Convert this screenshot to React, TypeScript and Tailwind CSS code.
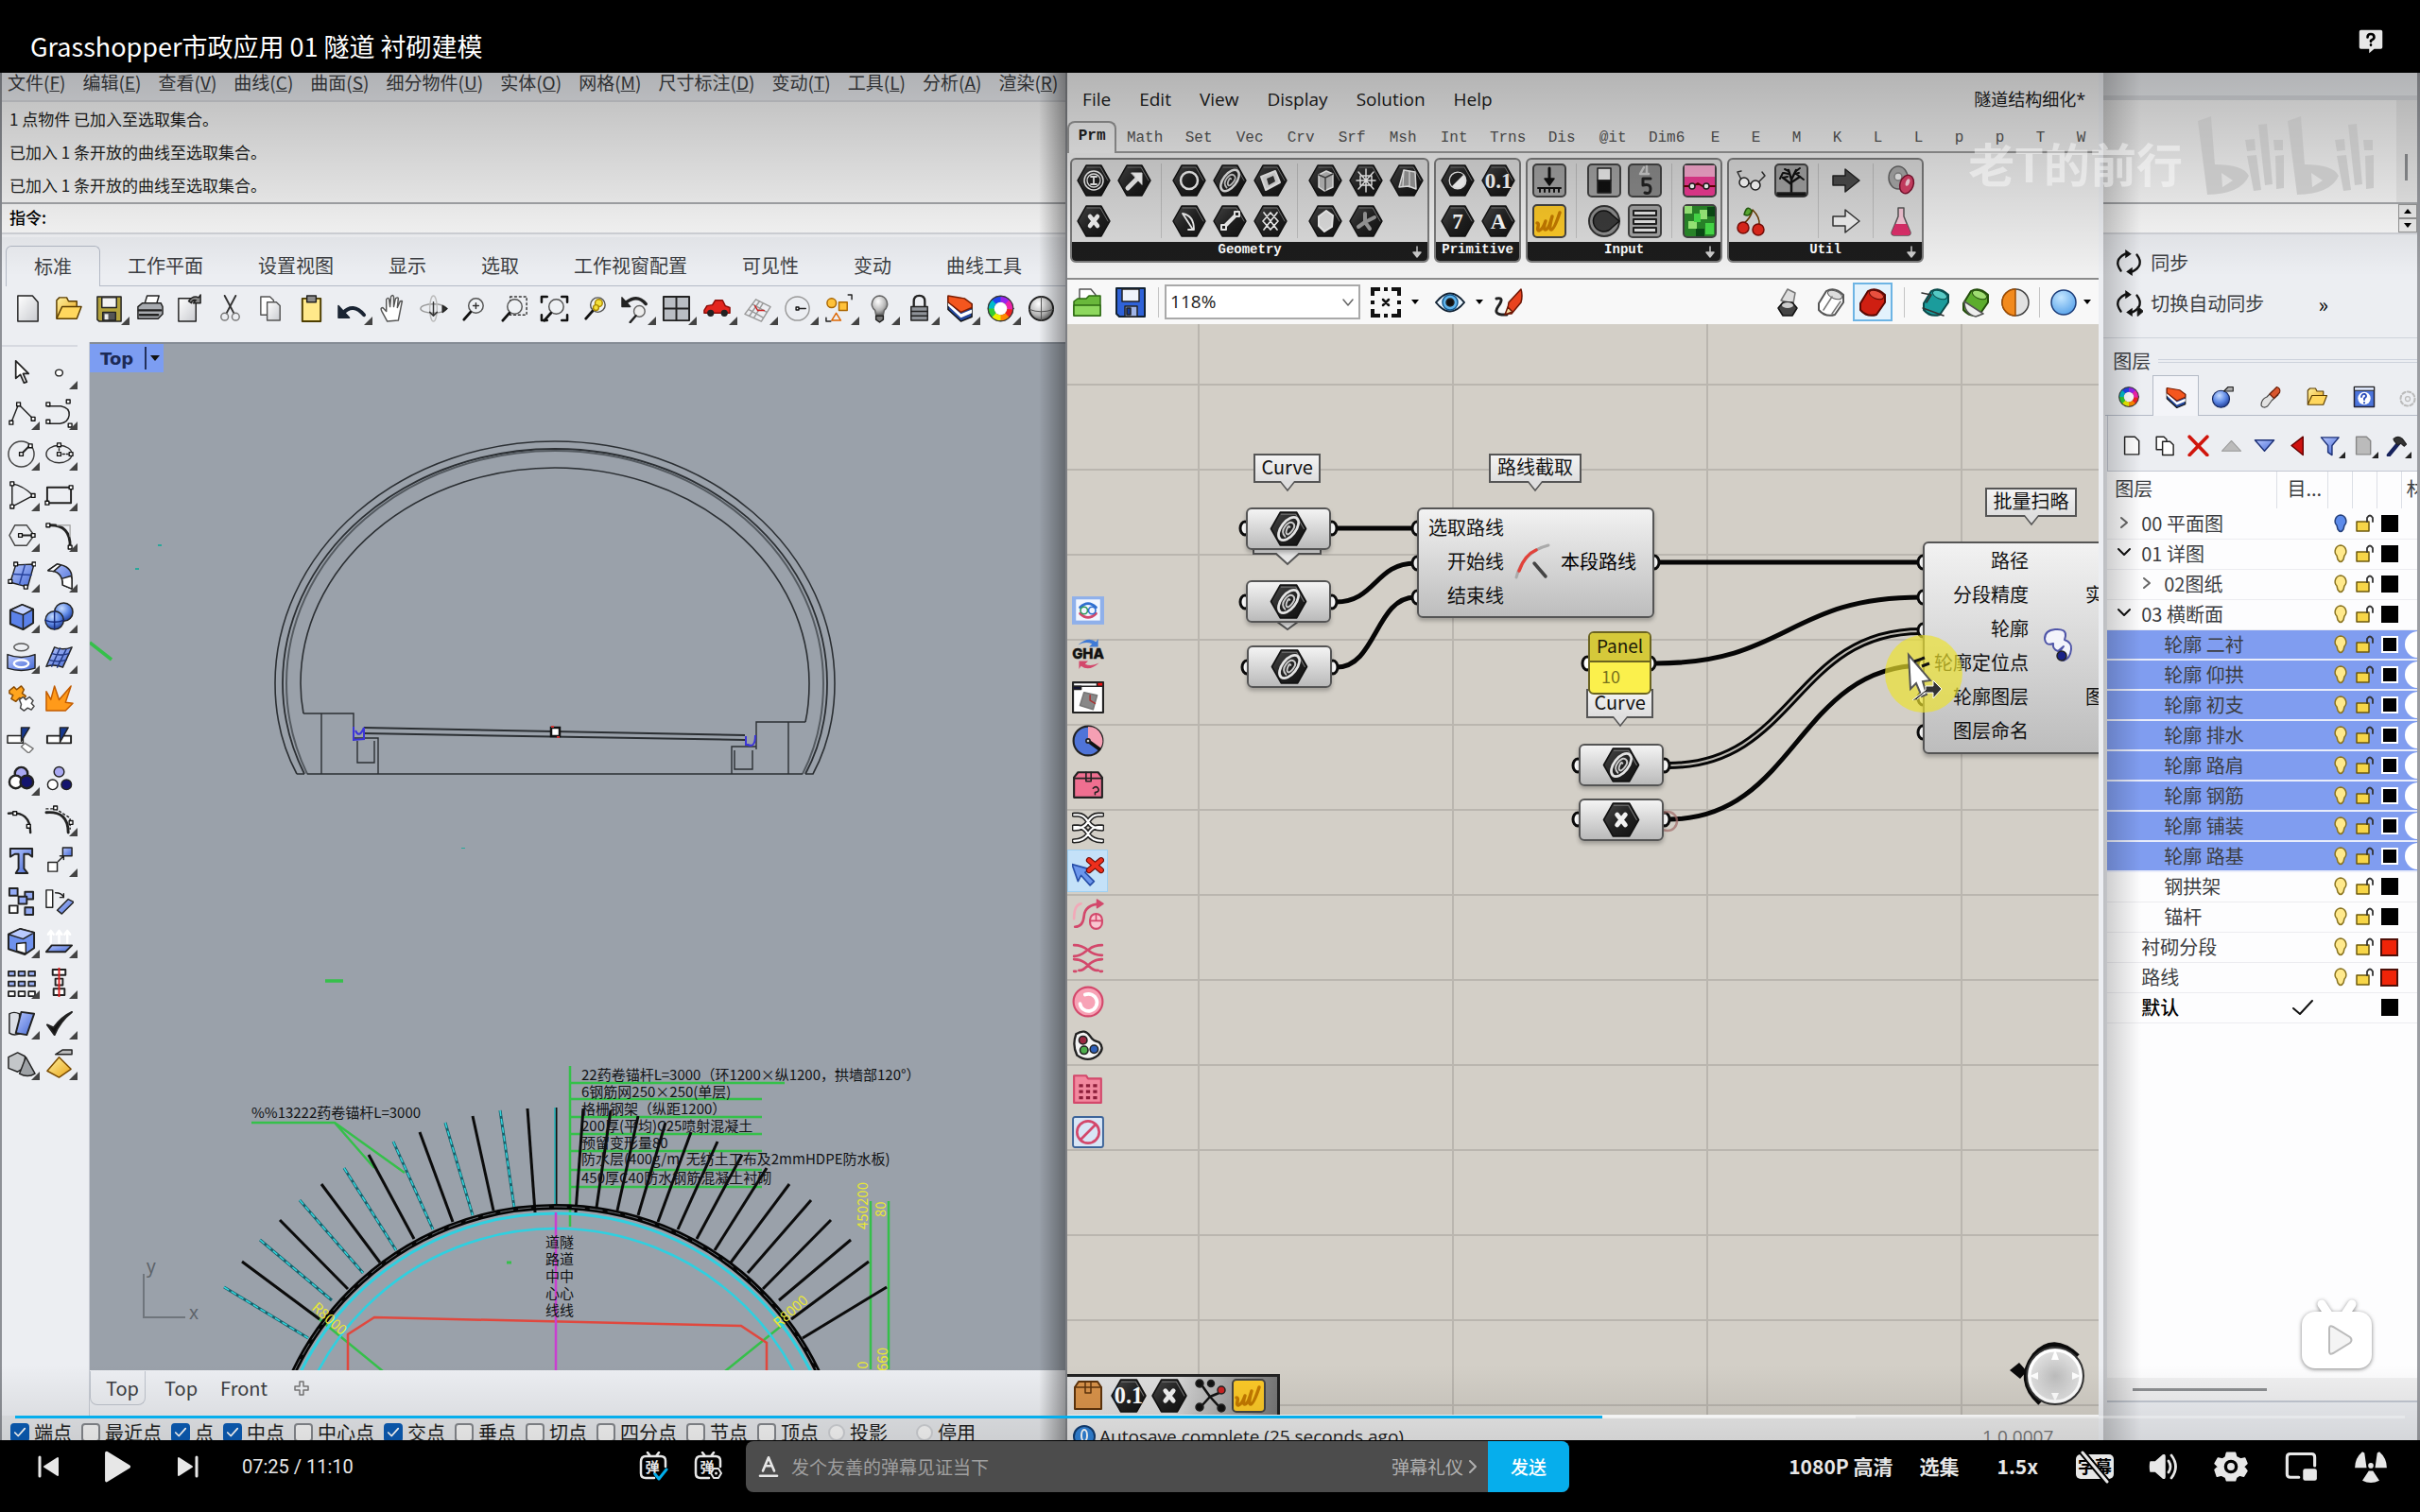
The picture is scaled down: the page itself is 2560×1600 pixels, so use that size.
import React from "react";

const CJK = "font-['Noto_Sans_CJK_SC',sans-serif]";

type Node = React.ReactNode;

function Ic({ children, className = "size-8", vb = "0 0 32 32" }: { children: Node; className?: string; vb?: string }) {
  return (
    <svg viewBox={vb} className={className} fill="none" stroke="#222" strokeWidth="1.5" strokeLinejoin="round" strokeLinecap="round" aria-hidden="true">
      {children}
    </svg>
  );
}

const Sq = ({ x, y, s = 4, f = "#fff" }: { x: number; y: number; s?: number; f?: string }) => (
  <rect x={x - s / 2} y={y - s / 2} width={s} height={s} fill={f} stroke="#111" strokeWidth="1.4" />
);

const Gradients = () => (
  <svg className="absolute size-0" aria-hidden="true">
    <defs>
      <linearGradient id="gold" x1="0" y1="0" x2="1" y2="1"><stop offset="0" stopColor="#fff2a0" /><stop offset="1" stopColor="#e9a51a" /></linearGradient>
      <linearGradient id="blue" x1="0" y1="0" x2="1" y2="1"><stop offset="0" stopColor="#b9c9ff" /><stop offset="1" stopColor="#4468d4" /></linearGradient>
      <radialGradient id="ball" cx=".4" cy=".3" r=".8"><stop offset="0" stopColor="#c6dcff" /><stop offset=".5" stopColor="#5d88e6" /><stop offset="1" stopColor="#102a80" /></radialGradient>
      <radialGradient id="sky" cx=".4" cy=".3" r=".8"><stop offset="0" stopColor="#c4e6ff" /><stop offset="1" stopColor="#4f9de8" /></radialGradient>
      <radialGradient id="grayball" cx=".4" cy=".3" r=".8"><stop offset="0" stopColor="#fff" /><stop offset=".6" stopColor="#b5b5b5" /><stop offset="1" stopColor="#444" /></radialGradient>
      <radialGradient id="dial" cx=".5" cy=".5" r=".6"><stop offset="0" stopColor="#bdbdbd" /><stop offset="1" stopColor="#ececec" /></radialGradient>
      <linearGradient id="paper" x1="0" y1="0" x2="1" y2="1"><stop offset="0" stopColor="#fff" /><stop offset="1" stopColor="#c9cbd0" /></linearGradient>
      <linearGradient id="hex" x1="0" y1="0" x2="1" y2="1"><stop offset="0" stopColor="#4a4a4a" /><stop offset=".5" stopColor="#222" /><stop offset="1" stopColor="#111" /></linearGradient>
    </defs>
  </svg>
);

/* ---------- Shared coloured glyphs ---------- */
const Wheel = () => {
  const c = ["#e22", "#f80", "#ee0", "#3c3", "#0bc", "#24e", "#92e", "#e2a"];
  return (
    <>
      <circle cx="16" cy="16" r="14" stroke="#333" strokeWidth="1" fill="#333" />
      {c.map((k, i) => {
        const a = (i * Math.PI) / 4, b = ((i + 1.1) * Math.PI) / 4;
        return <path key={k} d={`M${16 + 10 * Math.cos(a)} ${16 + 10 * Math.sin(a)} A10 10 0 0 1 ${16 + 10 * Math.cos(b)} ${16 + 10 * Math.sin(b)}`} stroke={k} strokeWidth="6" strokeLinecap="butt" />;
      })}
      <circle cx="16" cy="16" r="7" fill="#fff" stroke="none" />
    </>
  );
};
const Shell = () => (
  <>
    <path d="M3 3v14l14 13 12-5V11l-12 7z" fill="#24489e" stroke="#111" />
    <path d="M3 13l14 13 12-5v-4l-12 5L3 9z" fill="#fff" stroke="none" />
    <path d="M3 2l18 3 8 6v4l-12 5L3 9z" fill="#f4561e" stroke="#7a1c00" />
  </>
);
const FolderI = () => (
  <>
    <path d="M3 26V7l3-3h8l2 4h9v5" fill="url(#gold)" stroke="#5a3c00" />
    <path d="M3 27l6-13h21l-5 13z" fill="#ffd75e" stroke="#5a3c00" />
  </>
);
const Mag = ({ x = 18, y = 13 }: { x?: number; y?: number }) => (
  <>
    <circle cx={x} cy={y} r="8" fill="#eef1f4" stroke="#555" />
    <path d={`M${x - 6} ${y + 7}L${x - 13} ${y + 15}`} stroke="#111" strokeWidth="3" />
  </>
);

/* ---------- Rhino toolbar ---------- */
const fileTools: [string, boolean, Node][] = [
  ["新建", false, <path d="M5 2h16l6 7v21H5z" fill="url(#paper)" />],
  ["打开", false, <FolderI />],
  ["保存", true, <><path d="M3 3h26v27H5l-2-2z" fill="#b3a23c" /><path d="M8 4h16v11H8z" fill="#f2f2f2" /><path d="M9 20h14v9H9z" fill="#555" /><path d="M11 22h4v6h-4z" fill="#eee" stroke="none" /></>],
  ["打印", false, <><path d="M10 12l3-10h13l-3 10" fill="#fff" /><path d="M3 14l5-4h20l2 4v8l-5 5H3z" fill="#a8abb0" /><path d="M4 18h24M5 23h20" stroke="#222" strokeWidth="2.4" /></>],
  ["文件属性", false, <><path d="M4 5h14l5 5v20H4z" fill="url(#paper)" /><path d="M15 8q5-7 11-4l2-3v9h-8l3-3q-4-1-5 3z" fill="#888" /></>],
  ["剪切", false, <><path d="M10 2l10 19M22 2L12 21" stroke="#333" strokeWidth="2" /><circle cx="10" cy="25" r="4" stroke="#777" /><circle cx="22" cy="25" r="4" stroke="#777" /></>],
  ["复制", false, <><path d="M5 3h10l4 4v16H5z" fill="#fff" stroke="#555" /><path d="M12 9h10l4 4v16H12z" fill="url(#paper)" stroke="#555" /></>],
  ["粘贴", false, <><path d="M6 5h20v25H6z" fill="#ffe98a" stroke="#4d3d00" strokeWidth="2" /><path d="M11 2h10v7H11z" fill="#8b8b8b" /></>],
  ["撤销", true, <><path d="M6 21Q17 9 29 23" stroke="#1a2433" strokeWidth="4" /><path d="M1 13v13h12z" fill="#1a2433" stroke="#1a2433" /></>],
  ["平移", false, <path d="M10 30L4 19q-2-4 1-4l4 4V6q2-3 3 0l1 8 1-11q2-3 3 0v11l2-9q3-2 3 0l-1 10 3-7q3-1 2 1l-4 20z" fill="#fff" stroke="#555" />],
  ["旋转视图", false, <><ellipse cx="16" cy="16" rx="14" ry="5" stroke="#999" /><ellipse cx="16" cy="16" rx="4" ry="14" stroke="#bbb" /><path d="M16 9v14M12 20l4 4 4-4" stroke="#333" /><path d="M26 13l5 3-5 4z" fill="#333" /></>],
  ["动态缩放", false, <><Mag /><path d="M15 13h6M18 10v6" stroke="#333" /></>],
  ["框选缩放", false, <><path d="M11 3h18v20H11z" strokeDasharray="2 3" stroke="#333" /><Mag x={16} y={14} /></>],
  ["缩放至最大范围", false, <><path d="M2 9V3h6M24 3h6v6M30 23v6h-6M8 29H2v-6" stroke="#111" strokeWidth="2.6" /><Mag x={18} y={14} /></>],
  ["缩放至选取物件", false, <><Mag x={19} y={12} /><circle cx="20" cy="10" r="4" fill="#f5e13a" stroke="#a80" /><circle cx="17" cy="15" r="3" fill="#f5e13a" stroke="#a80" /></>],
  ["复原视图", true, <><path d="M6 9q12-9 21 2" stroke="#222" strokeWidth="3.5" /><path d="M1 4v10h9z" fill="#222" /><circle cx="20" cy="19" r="6" fill="#eee" stroke="#666" /><path d="M16 24l-6 7" strokeWidth="2.6" /></>],
  ["四视图", true, <><path d="M2 3h28v26H2z" fill="#b9bdc3" strokeWidth="2" /><path d="M16 3v26M2 16h28" strokeWidth="2" /></>],
  ["载入车辆", true, <><path d="M2 18l3-5 6-1 3-5h8l3 6 5 2v6H2z" fill="#e3251e" stroke="#8c0c08" /><circle cx="9" cy="21" r="3" fill="#222" /><circle cx="24" cy="21" r="3" fill="#222" /></>],
  ["工作平面", true, <><path d="M2 22L14 6l16 8-10 16zM6 17l16 9M10 11l16 9M12 26L22 10M7 24L18 8" stroke="#999" /><path d="M16 18l-3-5M16 18h7" stroke="#c22" /></>],
  ["圆", true, <><circle cx="15" cy="16" r="13" stroke="#999" /><path d="M15 16h9" /><Sq x={15} y={16} s={3} /></>],
  ["选取", true, <><circle cx="8" cy="10" r="5" fill="#ffc23a" stroke="#a60" /><path d="M16 9h9v9h-9z" fill="#ffc23a" stroke="#a60" /><path d="M13 21l5 8H8z" stroke="#d60" /><path d="M26 1h4v5M2 26v4h5" stroke="#222" /></>],
  ["隐藏", true, <><path d="M16 2a9 9 0 0 1 5 16l-1 5h-8l-1-5a9 9 0 0 1 5-16z" fill="url(#grayball)" stroke="#666" /><path d="M12 24h8v4l-4 3-4-3z" fill="#777" /></>],
  ["锁定", true, <><path d="M10 14V8q0-6 6-6t6 6v6" strokeWidth="2.4" /><path d="M7 14h18v15H7z" fill="#8f9399" /><path d="M7 19h18M7 24h18" /></>],
  ["图层", true, <Shell />],
  ["颜色", true, <Wheel />],
  ["渲染", false, <><circle cx="16" cy="16" r="13" fill="url(#grayball)" stroke="#222" strokeWidth="2" /><path d="M3 17q13 5 26 0M16 3v26" stroke="#555" strokeWidth="1" /></>],
];

const pts = (list: [number, number][]) => list.map(([x, y], i) => <Sq key={i} x={x} y={y} />);

const sideTools: [string, boolean, Node][] = [
  ["选取", false, <path d="M10 3v19l5-4 4 9 3-1-4-9h6z" fill="#fff" strokeWidth="1.8" />],
  ["点", true, <ellipse cx="16" cy="16" rx="4" ry="3.5" fill="#fff" />],
  ["多重直线", true, <><path d="M5 26L13 6l16 16" />{pts([[5, 26], [13, 6], [29, 22]])}</>],
  ["控制点曲线", true, <><path d="M4 8h14q10 2 9 10t-10 9H4" />{pts([[4, 6], [26, 3], [4, 25], [28, 29]])}</>],
  ["圆", true, <><circle cx="16" cy="16" r="14" stroke="#444" /><path d="M16 16l9-9" strokeWidth="2" />{pts([[16, 16], [26, 7]])}</>],
  ["椭圆", true, <><ellipse cx="16" cy="16" rx="14" ry="9.5" stroke="#333" /><path d="M16 16V6M16 16h13" strokeDasharray="2 2" />{pts([[16, 6], [16, 16], [29, 16]])}</>],
  ["圆弧", true, <><path d="M6 4v25L29 17Q18 6 6 4z" />{pts([[6, 4], [6, 29], [29, 17]])}</>],
  ["矩形", true, <><path d="M3 8h26v17H3z" strokeWidth="2" />{pts([[29, 8], [3, 25]])}</>],
  ["多边形", true, <><path d="M9 5h13l8 11-8 11H9L3 16z" stroke="#444" /><path d="M15 16h14" strokeWidth="2" />{pts([[15, 16], [29, 16]])}</>],
  ["曲线圆角", true, <><path d="M5 5q24-1 23 24" strokeWidth="3" /><path d="M14 5h14v12" stroke="#aaa" />{pts([[4, 5], [28, 29]])}</>],
  ["曲面", true, <><path d="M10 4l20-1-7 25-19-5z" fill="url(#blue)" /><path d="M20 4l-6 21M7 14l20 1" stroke="#27429c" />{pts([[10, 3], [30, 3], [4, 22], [21, 28]])}</>],
  ["挤出曲面", true, <><path d="M4 10l10-7q16 2 16 15v12l-10-4q0-16-16-16z" fill="url(#blue)" /><path d="M4 10l10-7 4 1-8 7zM20 26q0-5-1-7l10-3q1 2 1 4v10z" fill="#fff" /></>],
  ["立方体", true, <><path d="M4 9l13-6 12 5v15l-11 7-14-6z" fill="#5b82ea" strokeWidth="2" /><path d="M4 9l14 5 11-6-12-5z" fill="#c4d3ff" /><path d="M18 14v16" /></>],
  ["球体", true, <><circle cx="21" cy="11" r="10" fill="url(#ball)" /><circle cx="11" cy="20" r="10" fill="url(#ball)" /><path d="M1 20q10 4 20 0M11 10v20" stroke="#14297a" /></>],
  ["投影曲线", true, <><ellipse cx="16" cy="5" rx="8" ry="4" stroke="#555" /><path d="M1 13q15 6 30 0v15q-15 5-30 0z" fill="url(#blue)" /><ellipse cx="16" cy="23" rx="8" ry="4" stroke="#fff" strokeWidth="2.5" /></>],
  ["网格", true, <><path d="M11 5q9 4 19 0L20 27q-9-4-18-1z" fill="url(#blue)" /><path d="M17 6L8 26M24 7L14 27M8 12q9 3 19 0M5 19q9 3 19 0" stroke="#1e357f" /></>],
  ["组合", false, <><path d="M3 8l5-4 3 3 5-4 3 4-2 4 4 3-3 4-4-2-4 4-5-3 2-4-4-2z" fill="#ffa51e" stroke="#8a4a00" /><path d="M14 18l4-3 3 3 4-3 4 4-2 3 3 3-3 4-4-2-4 3-4-3 1-4z" fill="#fff" stroke="#444" /></>],
  ["炸开", false, <path d="M2 30V9l5 9L11 3l5 15L29 3l-6 18 8 1-8 8z" fill="#ff9a1a" stroke="#c25c00" />],
  ["修剪", false, <><path d="M1 13h17v8H1z" fill="#fff" /><path d="M16 4h9l-9 15z" fill="#16388f" /><path d="M20 21l9 6-5 5-8-7z" fill="#fff" stroke="#777" /></>],
  ["分割", false, <><path d="M3 13h26v8H3z" fill="#fff" strokeWidth="2" /><path d="M17 4h9l-9 16z" fill="#16388f" /></>],
  ["布尔运算联集", true, <><circle cx="16" cy="10" r="7" fill="#a9a9f2" strokeWidth="2.5" /><circle cx="10" cy="19" r="7" fill="#fff" strokeWidth="2.5" /><circle cx="22" cy="19" r="7" fill="#14146e" strokeWidth="2.5" /></>],
  ["群组", false, <><circle cx="16" cy="8" r="5.5" fill="#a9a9f2" /><circle cx="9" cy="22" r="5.5" fill="#fff" /><circle cx="24" cy="22" r="5.5" fill="#14146e" /></>],
  ["编辑点", false, <><path d="M2 9q24-3 24 21" strokeWidth="2.5" />{pts([[9, 9], [24, 23]])}</>],
  ["控制点", true, <><path d="M2 8q24-2 24 22" strokeWidth="3" /><path d="M2 4h10l16 10v12" strokeDasharray="2 3" />{pts([[12, 3], [29, 19]])}</>],
  ["文字", false, <path d="M4 3h24v9l-4-3h-5v16l4 5H10l3-5V9H9l-5 3z" fill="url(#blue)" strokeWidth="2" />],
  ["变动", true, <><path d="M4 18h10v10H4z" fill="#fff" /><path d="M20 2h10v9H20z" fill="url(#blue)" /><path d="M15 17l6-6M17 11h4v4" /></>],
  ["阵列", false, <>{[[7, 6], [24, 10], [17, 15], [7, 25], [24, 27]].map(([x, y], i) => <rect key={i} x={x - 4} y={y - 4} width="9" height="8" fill={i === 3 ? "#fff" : "#94abf5"} strokeWidth="2" />)}</>],
  ["定位", false, <><path d="M2 4h7v19H2z" fill="#fff" /><path d="M14 26l12-12 6 3-13 13z" fill="url(#blue)" /><path d="M12 7q7 0 9 5M17 12h4V8" /></>],
  ["实体编辑", true, <><path d="M2 8l13-6 15 4v17l-10 7-18-6z" fill="#6f92ee" strokeWidth="2" /><path d="M2 8l16 5 12-7-15-4z" fill="#b9caff" /><path d="M11 18l10-1v12l-10-3z" fill="#fff" /></>],
  ["移动", true, <><path d="M8 20h22l-7 7H2z" fill="url(#blue)" strokeWidth="2" /><path d="M7 17V5M16 17V5M25 17V5M4 8l3-4 3 4M13 8l3-4 3 4M22 8l3-4 3 4" stroke="#fff" strokeWidth="2.5" /></>],
  ["矩形阵列", true, <>{[4, 15, 26].map((y) => [4, 15, 26].map((x) => <rect key={`${x}-${y}`} x={x - 2} y={y} width="7" height="5" fill={y === 26 ? "#fff" : "#9db3fa"} strokeWidth="1.8" />))}</>],
  ["对齐", true, <><path d="M9 2h14v6H9zM12 12h8v7h-8zM10 23h12v7H10z" fill="#fff" strokeWidth="2" /><path d="M16 0v32" stroke="#d22" strokeWidth="2" /></>],
  ["弯曲", true, <><path d="M3 6q5-3 11 0v22q-7 2-11-1z" fill="#dcdfe6" /><path d="M16 4l14 2-8 23-12-2z" fill="url(#blue)" strokeWidth="2" /></>],
  ["检查", true, <path d="M3 18l8 11Q17 14 30 4 19 9 10 21z" fill="#111" strokeWidth="2" />],
  ["基本体", true, <><path d="M2 9l10-5 8 4v12l-8 5-10-4z" fill="#c3c6c9" /><path d="M21 9l10 18q-8 5-17 0z" fill="#9ea2a6" /></>],
  ["放样", true, <><path d="M16 9l13 13-13 9L3 24z" fill="url(#gold)" stroke="#7a4b00" /><path d="M12 6l8-5h10v5H20z" fill="#bbb" /></>],
];

function Corner() {
  return <span className="absolute right-0 bottom-1 size-0 border-b-[9px] border-l-[9px] border-b-[#444] border-l-transparent" />;
}

function ToolButton({ label, corner, children }: { label: string; corner?: boolean; children: Node }) {
  return (
    <button type="button" aria-label={label} className="relative flex h-[43px] w-full items-center justify-center">
      <Ic className="size-[31px]">{children}</Ic>
      {corner && <Corner />}
    </button>
  );
}

/* ---------- Tunnel drawing ---------- */
const boltTips: [number, number, number, number][] = [
  [237, 1361, 326, 1415], [256, 1334, 338, 1395], [275, 1311, 351, 1375], [296, 1290, 368, 1363], [317, 1269, 384, 1346],
  [340, 1252, 402, 1335], [364, 1235, 419, 1322], [390, 1221, 438, 1310], [416, 1207, 458, 1300], [444, 1197, 479, 1292],
  [471, 1187, 500, 1285], [500, 1180, 522, 1280], [529, 1174, 544, 1277], [558, 1172, 566, 1282],
];
const notes: [string, number, number, number][] = [
  ["22药卷锚杆L=3000（环1200×纵1200，拱墙部120°）", 1142, 1145, 830],
  ["6钢筋网250×250(单层)", 1160, 1162, 806],
  ["格栅钢架（纵距1200）", 1178, 1181, 806],
  ["200厚(平均)C25喷射混凝土", 1196, 1199, 806],
  ["预留变形量80", 1214, 1217, 806],
  ["防水层(400g/m  无纺土工布及2mmHDPE防水板)", 1231, 1237, 806],
  ["450厚C40防水钢筋混凝土衬砌", 1251, 1255, 806],
];

function TunnelDrawing() {
  return (
    <svg className="absolute inset-0 h-full w-full" fill="none" role="img" aria-label="隧道断面">
      <g transform="translate(-95 -363)" stroke="#2b2f33" strokeWidth="1.4">
        <path d="M314 818Q291 775 291 722A296 256 0 0 1 883 722Q883 775 860 818H852M314 818h8" strokeWidth="1.6" />
        <path d="M322 818Q299 772 299 722A288 248 0 0 1 875 722Q875 775 852 818" strokeWidth="1.8" />
        <path d="M325 818Q303 772 303 722A284 246 0 0 1 871 722Q871 775 849 818" stroke="#555b61" strokeWidth="2" />
        <path d="M321 754Q318 738 318 722A269 228 0 0 1 856 722Q856 745 852 763" strokeWidth="1.6" />
        <path d="M321 754H374V783M374 780H400V818M378 783V806H396V783M340 754V818M325 818H849" />
        <path d="M852 763H800V792M800 789H774V818M777 793V813H796V793M834 763V818" />
        <path d="M385 769L788 777M385 775L788 782" strokeWidth="2" />
        <path d="M374 768v14l11-1v-12q-5 12-9 3M789 778v9h2q8 4 8-10" stroke="#3b34d8" strokeWidth="2" />
        <rect x="583" y="769" width="9" height="9" fill="#fff" stroke="#111" strokeWidth="2.5" />
        <path d="M583 768h3M589 779h3" stroke="#c33" strokeWidth="2" />

        <g stroke="#35c04a" strokeWidth="2.5">
          <path d="M95 679l23 18M344 1037h19" strokeWidth="3.5" />
          <path d="M266 1187h88l74 53M354 1187l42 48M603 1127v170M921 1270v178M940 1270v178M328 1387l77 63M829 1400l-62 50" />
          {notes.map(([t, , y, x2]) => <path key={t} d={`M603 ${y}H${x2}`} />)}
        </g>
        <path d="M536 1335h5" stroke="#35c04a" strokeWidth="3" />
        <path d="M145 600v2M169 575v2M490 896v1" stroke="#2aa79a" strokeWidth="4" />

        {boltTips.map(([x1, y1, x2, y2], i) => (
          <g key={x1}>
            <path d={`M${x1} ${y1}L${x2} ${y2}`} stroke={i % 2 ? "#0b0b0b" : "#16606a"} strokeWidth="3" />
            {i % 2 === 0 && <path d={`M${x1} ${y1}L${x2} ${y2}`} stroke="#35d5dc" strokeWidth="1.5" strokeDasharray="6 3" />}
            <path d={`M${1175 - x1} ${y1}L${1175 - x2} ${y2}`} stroke="#0b0b0b" strokeWidth="3" />
          </g>
        ))}
        <path d="M588 1171v106" stroke="#111" strokeWidth="3" />
        <path d="M587 1171v106" stroke="#35d5dc" />

        <circle cx="588" cy="1584" r="301" stroke="#2fd0e0" strokeWidth="3" />
        <circle cx="588" cy="1584" r="285" stroke="#2fd0e0" strokeWidth="2.5" />
        <circle cx="588" cy="1583" r="307" stroke="#050505" strokeWidth="6" />
        <circle cx="588" cy="1583" r="307" stroke="#6b6f74" strokeWidth="1" strokeDasharray="14 5" />
        <path d="M368 1450V1411L396 1393 784 1402 811 1420V1450" stroke="#e0483e" strokeWidth="2.5" />
        <path d="M588 1282V1450" stroke="#c93fd0" strokeWidth="2.5" />

        <g stroke="none" fill="#101214" fontSize="15" fontFamily="'Noto Sans CJK SC', sans-serif">
          <text x="266" y="1182">%%13222药卷锚杆L=3000</text>
          {notes.map(([t, y]) => <text key={t} x="615" y={y} xmlSpace="preserve">{t}</text>)}
          {["道隧", "路道", "中中", "心心", "线线"].map((t, i) => <text key={t} x="577" y={1319 + i * 18}>{t}</text>)}
          <g fill="#e8e834" fontSize="15">
            <text transform="translate(918 1300) rotate(-90)">450200</text>
            <text transform="translate(937 1287) rotate(-90)">80</text>
            <text transform="translate(918 1456) rotate(-90)">10</text>
            <text transform="translate(939 1450) rotate(-90)">660</text>
            <text transform="translate(329 1384) rotate(42)">R8000</text>
            <text transform="translate(824 1405) rotate(-42)">R8000</text>
          </g>
        </g>
        <path d="M152 1347V1393H196" stroke="#6f757c" strokeWidth="2" />
        <g stroke="none" fill="#5e646a" fontSize="19" fontFamily="'Noto Sans', sans-serif">
          <text x="155" y="1346">y</text>
          <text x="200" y="1395">x</text>
        </g>
      </g>
    </svg>
  );
}

/* ---------- Rhino window ---------- */
const snaps: [string, boolean][] = [["端点", true], ["最近点", false], ["点", true], ["中点", true], ["中心点", false], ["交点", true], ["垂点", false], ["切点", false], ["四分点", false], ["节点", false], ["顶点", false]];

function RhinoWindow() {
  return (
    <section className="relative flex h-full min-w-0 flex-[1126] flex-col overflow-hidden border-l-2 border-[#8d9096] bg-[#eceef2] text-[#3c3e42]">
      <nav className="flex h-[29px] shrink-0 items-start gap-[18px] overflow-hidden pl-1.5 text-[19px] leading-5 whitespace-nowrap">
        {[["文件", "F"], ["编辑", "E"], ["查看", "V"], ["曲线", "C"], ["曲面", "S"], ["细分物件", "U"], ["实体", "O"], ["网格", "M"], ["尺寸标注", "D"], ["变动", "T"], ["工具", "L"], ["分析", "A"], ["渲染", "R"]].map(([t, k]) => (
          <button type="button" key={t} className="shrink-0">{t}(<u>{k}</u>)</button>
        ))}
      </nav>
      <div className="h-[110px] shrink-0 border-t-2 border-b-2 border-t-[#dcdee2] border-b-[#a9abae] bg-[#fafafa] pl-2 text-[17px] leading-[35px] text-[#1d1e20]">
        <p>1 点物件 已加入至选取集合。</p>
        <p>已加入 1 条开放的曲线至选取集合。</p>
        <p>已加入 1 条开放的曲线至选取集合。</p>
      </div>
      <label className="flex h-8 shrink-0 items-center border-b-2 border-[#d5d7dc] bg-[#fcfcfc] pb-0.5 pl-2 text-[17px] font-medium text-black">
        指令:
        <input className="ml-1 min-w-0 flex-1 bg-transparent outline-none" />
      </label>
      <div className="flex h-[55px] shrink-0 items-end border-t-[3px] border-[#f4f5f8] pl-1 text-[20px] whitespace-nowrap">
        {["标准", "工作平面", "设置视图", "显示", "选取", "工作视窗配置", "可见性", "变动", "曲线工具"].map((t, i) => (
          <button type="button" key={t} className={i === 0 ? "h-[43px] rounded-t-md border border-b-0 border-[#b4bac6] px-[29px]" : "h-[43px] border-b border-[#b4bac6] px-[29px]"}>{t}</button>
        ))}
        <span className="h-[43px] flex-1 border-b border-[#b4bac6]" />
      </div>
      <div className="grid h-[59px] shrink-0 grid-cols-26 pt-0.5 pr-1 pl-1.5">
        {fileTools.map(([l, c, n]) => <ToolButton key={l} label={l} corner={c}>{n}</ToolButton>)}
      </div>
      <div className="flex min-h-0 flex-1">
        <aside className="w-[93px] shrink-0 border-r border-[#c8ccd4] pt-[3px] pr-3">
          <div className="grid grid-cols-2 border-t-2 border-[#d6d9e0] pt-1.5">
            {sideTools.map(([l, c, n]) => <ToolButton key={l} label={l} corner={c}>{n}</ToolButton>)}
          </div>
        </aside>
        <div className="flex min-w-0 flex-1 flex-col">
          <div className="relative min-h-0 flex-1 overflow-hidden border-t-2 border-[#858c95] bg-[#9aa1aa]">
            <TunnelDrawing />
            <button type="button" className="absolute top-0 left-0 flex h-[30px] items-center bg-[#7c9df2] pl-[11px] font-['DejaVu_Sans',sans-serif] text-[18px] font-bold text-[#1c2a55]">
              Top
              <span className="ml-3 h-6 w-[2px] bg-[#23305c]" />
              <span className="mx-1 size-0 border-x-[5px] border-t-[6px] border-x-transparent border-t-[#111]" />
            </button>
          </div>
          <div className="flex h-12 shrink-0 items-start pt-px text-[20px]">
            <button type="button" className="h-9 rounded-b-lg border border-t-0 border-[#bfc4cd] pr-1.5 pl-4">Top</button>
            <button type="button" className="ml-5 h-9">Top</button>
            <button type="button" className="ml-6 h-9">Front</button>
            <button type="button" aria-label="添加视图" className="ml-7 flex h-9 items-center">
              <Ic className="size-4" vb="0 0 16 16"><path d="M6 1h4v5h5v4h-5v5H6v-5H1V6h5z" stroke="#777" /></Ic>
            </button>
          </div>
        </div>
      </div>
      <div className="h-[26px] shrink-0 overflow-hidden bg-[#e4e6e9] text-[#1d1e20]">
        <div className="flex h-9 items-center gap-2.5 pl-[9px] text-[20px] whitespace-nowrap">
          {snaps.map(([t, on]) => (
            <label key={t} className="relative flex items-center gap-[5px]">
              <input type="checkbox" defaultChecked={on} className="size-5 appearance-none rounded-[4px] border-2 border-[#85888d] bg-[#f5f5f5] checked:border-[#0b5cb5] checked:bg-[#0b5cb5]" />
              {on && <Ic className="pointer-events-none absolute left-[3px] size-3.5" vb="0 0 16 16"><path d="M2 8l4 4 8-9" stroke="#fff" strokeWidth="2" /></Ic>}
              {t}
            </label>
          ))}
          {["投影", "停用"].map((t) => (
            <label key={t} className="mr-5 flex items-center gap-[5px]">
              <input type="radio" name="snapmode" className="size-[18px] appearance-none rounded-full border-2 border-[#cfd1d5] bg-[#f7f7f7]" />
              {t}
            </label>
          ))}
        </div>
      </div>
      <span className="pointer-events-none absolute inset-y-0 right-0 w-7 bg-gradient-to-l from-black/35 to-transparent" />
    </section>
  );
}

/* ---------- Grasshopper ---------- */
function Hex({ children, className = "h-[34px] w-9" }: { children: Node; className?: string }) {
  return (
    <Ic className={className} vb="0 0 36 34">
      <path d="M10 1h16l9 16-9 16H10L1 17z" fill="url(#hex)" stroke="#111" strokeWidth="1.5" />
      <path d="M11 3h14l8 14" stroke="#777" strokeWidth="1" />
      <g stroke="#f2f2f2" strokeWidth="2">{children}</g>
    </Ic>
  );
}
const glyph = (t: string) => (
  <text x="18" y="25" textAnchor="middle" fontSize="23" fontWeight="700" fontFamily="'Liberation Serif', serif" fill="#fff" stroke="none">{t}</text>
);
const Spiral = () => (
  <g transform="rotate(38 18 17)"><ellipse cx="18" cy="17" rx="7" ry="13" stroke="#e4e4e4" strokeWidth="2.5" /><path d="M20 25q-6-1-6-8t4-7 4 6-2 6-3-4 1-3" stroke="#ccc" strokeWidth="1.8" /></g>
);
const Cross = () => <path d="M14 12l8 10M22 12l-8 10" strokeWidth="4.5" />;

function Tile({ children, fill = "#a2a2a2" }: { children: Node; fill?: string }) {
  return (
    <Ic className="size-9" vb="0 0 36 36">
      <rect x="1" y="1" width="34" height="34" rx="4" fill={fill} stroke="#444" strokeWidth="2" />
      {children}
    </Ic>
  );
}
const Scribble = () => <path d="M5 20q2 0 1 4t1 4q4-1 7-10-3 9 0 9t7-14q-4 14-1 14t9-18" stroke="#c47a00" strokeWidth="3.5" />;

type Cell = Node | null;
const ribbon: { title: string; more: boolean; groups: Cell[][] }[] = [
  {
    title: "Geometry", more: true,
    groups: [
      [<Hex><circle cx="18" cy="17" r="10" strokeWidth="1.5" /><circle cx="18" cy="17" r="7" strokeWidth="1.3" /><path d="M18 13v8M15 13h6M15 21h6" strokeWidth="1.8" /></Hex>, <Hex><path d="M11 25l10-10" strokeWidth="5" /><path d="M15 9h11v12z" fill="#fff" strokeWidth="1" /></Hex>, <Hex><Cross /></Hex>, null],
      [<Hex><circle cx="18" cy="17" r="9" strokeWidth="2.5" /></Hex>, <Hex><Spiral /></Hex>, <Hex><path d="M8 13l15-6 5 12-15 8z" fill="#ddd" /><path d="M14 15l7-3 2 6-7 4z" fill="#333" stroke="none" /></Hex>,
      <Hex><path d="M11 9q12 2 12 17M11 9l11 17h-5" strokeWidth="1.8" /></Hex>, <Hex><path d="M12 23L25 10" strokeWidth="4" /><rect x="9" y="21" width="5" height="5" fill="#222" /><rect x="23" y="7" width="5" height="5" fill="#222" /></Hex>, <Hex><path d="M18 8l8 9-8 9-8-9zM11 8l14 18M25 8L11 26" strokeWidth="1.7" /></Hex>],
      [<Hex><path d="M11 11l8-4 7 3v14l-9 4-6-4z" fill="#bbb" strokeWidth="1.5" /><path d="M11 11l7 3 8-4M18 14v13" stroke="#444" strokeWidth="1.5" /></Hex>, <Hex><path d="M18 5v24M8 17h20M10 8l16 18M26 8L10 26M12 12h12v10H12z" strokeWidth="1.5" /></Hex>, <Hex><path d="M10 24l5-18 12 2 1 18-8-3z" fill="#999" strokeWidth="1.5" /><path d="M15 6l-1 17M21 7v17" strokeWidth="1.2" /></Hex>,
      <Hex><path d="M11 12l8-6 7 5-1 12-8 5-6-6z" fill="#ddd" /></Hex>, <Hex><path d="M17 18l-7 5M17 18l10-5M17 18V9M17 18l5 7" strokeWidth="4" stroke="#999" /></Hex>, null],
    ],
  },
  {
    title: "Primitive", more: false,
    groups: [[<Hex><circle cx="18" cy="17" r="8.5" fill="#fff" /><path d="M12 23A8.5 8.5 0 0 1 24 11z" fill="#222" stroke="none" /></Hex>, <Hex>{glyph("0.1")}</Hex>, <Hex>{glyph("7")}</Hex>, <Hex>{glyph("A")}</Hex>]],
  },
  {
    title: "Input", more: true,
    groups: [
      [<Tile><path d="M18 5v13" strokeWidth="3" stroke="#111" /><path d="M13 16h10l-5 7z" fill="#111" stroke="#111" /><path d="M6 26h24M8 30v-4M13 30v-4M18 30v-4M23 30v-4M28 30v-4" stroke="#111" strokeWidth="2" /></Tile>, <Tile fill="#fcc928"><Scribble /></Tile>],
      [<Tile><path d="M11 5h14v13H11z" fill="#eee" /><path d="M11 18h14v13H11z" fill="#111" /></Tile>, <Tile fill="#8a8a8a"><path d="M17 4l-4 7h9M20 3v8" stroke="#ccc" strokeWidth="2.5" /><path d="M24 16h-8v7q8-2 8 4t-6 4" stroke="#222" strokeWidth="3" /></Tile>,
      <Ic className="size-9" vb="0 0 36 36"><circle cx="18" cy="18" r="16" fill="#8d8d8d" stroke="#333" strokeWidth="2" /><path d="M18 7a11 11 0 1 0 8 18l8-7-8-7a11 11 0 0 0-8-4z" fill="#3a3a3a" stroke="#111" /></Ic>,
      <Tile><path d="M6 7h24v5H6zM6 16h24v5H6zM6 25h24v5H6z" fill="#e4e4e4" strokeWidth="2" /></Tile>],
      [<Tile fill="#ee3a93"><path d="M2 2h32v12H2z" fill="#f9a8cf" stroke="none" /><path d="M2 24h9l5-3 5 3h13" stroke="#600" strokeWidth="2" /><circle cx="10" cy="24" r="3" fill="#fff" /><circle cx="25" cy="24" r="3" fill="#fff" /></Tile>,
      <Tile fill="#2a8a2a"><g stroke="none"><path d="M2 2h8v8H2zM18 6h8v10h-8zM6 18h9v8H6z" fill="#9df07c" /><path d="M12 10h7v9h-7zM24 20h9v12h-9z" fill="#48e04a" /><path d="M26 3h8v10h-8zM14 26h9v8h-9z" fill="#0b4d16" /></g></Tile>],
    ],
  },
  {
    title: "Util", more: true,
    groups: [
      [<Ic><path d="M2 7l4 8M2 7l4-1M14 19l4 1M25 17l6-6-3-4" stroke="#333" /><circle cx="9" cy="18" r="5" fill="#fff" stroke="#222" /><circle cx="21" cy="21" r="5" fill="#fff" stroke="#222" /></Ic>,
      <Tile><path d="M18 31V17M18 22l-9-7M18 20l9-6M18 17l-3-10M18 17l5-10" stroke="#111" strokeWidth="2.5" /><path d="M6 16l3-6M9 15l5-1M27 14l-4-3M27 14l4 3M15 8l-4-2M23 8l4-3M15 11l-5-1M21 11l5-1" stroke="#111" strokeWidth="2" /><path d="M3 31h30v3H3z" fill="#111" /></Tile>,
      <Ic><path d="M18 4q-2 9-10 15M18 4q8 8 7 16" stroke="#6a3b00" /><path d="M17 5Q12-2 9 9q6 3 8-4z" fill="#5fb535" stroke="#276010" /><circle cx="8" cy="23" r="6" fill="#e1281c" stroke="#7a0c06" /><circle cx="24" cy="25" r="6" fill="#e1281c" stroke="#7a0c06" /></Ic>, null],
      [<Ic><path d="M2 11h13V4l15 12-15 12v-7H2z" fill="#4b4b4b" stroke="#222" /></Ic>, <Ic><path d="M2 11h13V4l15 12-15 12v-7H2z" fill="#f2f2f2" stroke="#333" /></Ic>],
      [<Ic><ellipse cx="13" cy="13" rx="10" ry="12" fill="#a9a9a9" stroke="#666" /><circle cx="13" cy="12" r="4" fill="#eee" stroke="#888" /><ellipse cx="22" cy="20" rx="7" ry="10" transform="rotate(20 22 20)" fill="#d84268" stroke="#7d1330" /><ellipse cx="23" cy="18" rx="2" ry="4" transform="rotate(20 23 18)" fill="#fbd3de" stroke="none" /></Ic>,
      <Ic><path d="M13 2h6v9l7 17q0 3-3 3H9q-3 0-3-3l7-17z" fill="#f8c8d8" stroke="#555" /><path d="M10 19h12l4 9q0 3-3 3H9q-3 0-3-3z" fill="#de2f6b" stroke="none" /></Ic>],
    ],
  },
];

const ghTabs = ["Prm", "Math", "Set", "Vec", "Crv", "Srf", "Msh", "Int", "Trns", "Dis", "@it", "Dim6", "E", "E", "M", "K", "L", "L", "p", "p", "T", "W"];

function RibbonPanel({ title, more, groups }: (typeof ribbon)[number]) {
  return (
    <div className="flex h-[111px] shrink-0 flex-col overflow-hidden rounded-md border-2 border-[#7c7c7c] bg-[#dcdcdc]">
      <div className="flex flex-1 px-px">
        {groups.map((g, i) => (
          <React.Fragment key={i}>
            {i > 0 && <span className="mx-[7px] my-1 w-px bg-[#bdbdbd]" />}
            <div className={g.length === 2 ? "grid grid-cols-[43px] grid-rows-[43px_43px]" : g.length === 4 ? "grid grid-cols-[43px_43px] grid-rows-[43px_43px]" : "grid grid-cols-[43px_43px_43px] grid-rows-[43px_43px]"}>
              {g.map((c, j) => c ? <button type="button" key={j} aria-label={`${title} ${i + 1}.${j + 1}`} className="flex items-center justify-center">{c}</button> : <span key={j} />)}
            </div>
          </React.Fragment>
        ))}
      </div>
      <div className="relative h-5 bg-[#1c1c1c] text-center font-['Liberation_Mono',monospace] text-[14px] leading-4 font-bold text-white">
        {title}
        {more && <Ic className="absolute right-1 bottom-0.5 size-3.5" vb="0 0 14 14"><path d="M7 1v9M3 7l4 5 4-5z" stroke="#ccc" fill="#ccc" /></Ic>}
      </div>
    </div>
  );
}

const Caret = () => <span className="size-0 border-x-4 border-t-[5px] border-x-transparent border-t-black" />;
const Barrel = ({ f, s = "#333", d = "#fff" }: { f: string; s?: string; d?: string }) => (
  <><path d="M3 17L11 4q9-5 18 4v8l-9 13q-10 3-17-5z" fill={f} stroke={s} strokeWidth="2" /><ellipse cx="20" cy="8" rx="8" ry="4" transform="rotate(22 20 8)" fill={d} stroke={s} strokeWidth="1" /></>
);

function ToolIcon({ label, children, className = "flex w-[46px] items-center justify-center" }: { label: string; children: Node; className?: string }) {
  return <button type="button" aria-label={label} className={className}><Ic>{children}</Ic></button>;
}

function CanvasToolbar() {
  return (
    <div className="flex h-[49px] shrink-0 items-center border-t-2 border-[#8b8b8b] bg-[#f8f8f8]">
      <ToolIcon label="Open" className="flex w-[42px] items-center justify-center"><path d="M8 14V2h12l5 6v9" fill="#fff" stroke="#555" /><path d="M2 30V15l4-3h9l3-3h12v21z" fill="#69b83b" stroke="#2d6a12" /><path d="M2 30V19h28v11z" fill="#8ed85e" stroke="#2d6a12" /></ToolIcon>
      <ToolIcon label="Save" className="ml-0.5 flex w-[46px] items-center justify-center"><path d="M1 1h30v30H4l-3-3z" fill="#2f62d8" stroke="#123" strokeWidth="2" /><path d="M7 2h18v13H7z" fill="#eef3fb" /><path d="M10 20h13v11H10z" fill="#9fb4e6" /><path d="M12 22h4v7h-4z" fill="#123a9c" /></ToolIcon>
      <span className="mx-1.5 h-8 w-px bg-[#c4c4c4]" />
      <div className="relative">
        <select aria-label="Zoom" className="h-[37px] w-[207px] appearance-none border-2 border-[#a9a9a9] bg-white pl-1 font-['Open_Sans',sans-serif] text-[19px] text-[#222]">
          <option>118%</option>
        </select>
        <Ic className="pointer-events-none absolute top-3 right-1.5 size-3.5" vb="0 0 14 14"><path d="M2 4l5 6 5-6" stroke="#666" /></Ic>
      </div>
      <ToolIcon label="Zoom extents" className="ml-1 flex w-[46px] items-center justify-center"><path d="M2 9V2h8M22 2h8v7M30 23v7h-8M10 30H2v-7M2 14v4M30 14v4M14 2h4M14 30h4" stroke="#111" strokeWidth="4" strokeLinecap="butt" strokeLinejoin="miter" /><path d="M13 13l6 6M19 13l-6 6" stroke="#111" strokeWidth="2.5" /></ToolIcon>
      <span className="w-1" />
      <Caret />
      <ToolIcon label="Named views" className="ml-2.5 flex w-[46px] items-center justify-center"><path d="M1 16Q16-3 31 16 16 35 1 16z" fill="#eaf6ff" stroke="#123" strokeWidth="2" /><circle cx="16" cy="16" r="8" fill="#5fb4ec" stroke="#155a90" /><circle cx="16" cy="16" r="4" fill="#111" /></ToolIcon>
      <span className="w-1" />
      <Caret />
      <ToolIcon label="Sketch" className="ml-1 flex w-[46px] items-center justify-center"><path d="M3 12q9-2 2 8t9 9" stroke="#222" strokeWidth="3" /><path d="M14 28l2-12L29 2q2 7 0 14L19 28z" fill="#e9431f" stroke="#6d1604" /><path d="M12 29l3-8 5 5z" fill="#f6dca0" stroke="#6d1604" /></ToolIcon>
      <div className="ml-auto flex items-center">
        <ToolIcon label="No preview"><path d="M9 14l7-12 8 4-2 11z" fill="#ddd" stroke="#777" /><path d="M6 22l5-6h10l5 6-5 8H11z" fill="#444" stroke="#111" /><ellipse cx="16" cy="19" rx="6" ry="3" fill="#ccc" stroke="none" /></ToolIcon>
        <ToolIcon label="Wireframe preview"><Barrel f="#fff" d="#ddd" s="#555" /><path d="M8 24l9-14M17 28l9-13" stroke="#777" /></ToolIcon>
        <ToolIcon label="Shaded preview" className="flex h-[41px] w-[42px] items-center justify-center border-2 border-[#6db4e4] bg-[#e3f2fc]"><Barrel f="#cf1f12" s="#5a0803" d="#e8503f" /></ToolIcon>
        <span className="mx-3 h-8 w-px bg-[#c4c4c4]" />
        <ToolIcon label="Selected preview" className="flex w-[42px] items-center justify-center"><Barrel f="#1b9c9c" s="#0a4a4a" d="#56c9c4" /><path d="M1 6l10 2-5 8M2 22l22 8" stroke="#333" /></ToolIcon>
        <ToolIcon label="Document preview" className="flex w-[42px] items-center justify-center"><Barrel f="#5dad2e" s="#244e0c" d="#9fdc72" /><path d="M4 15l20 13-8 3Q4 28 4 15z" fill="#eee" stroke="#555" /></ToolIcon>
        <ToolIcon label="Mesh quality" className="flex w-[42px] items-center justify-center"><circle cx="16" cy="16" r="14" fill="#e2e2e2" stroke="#444" /><path d="M16 2a14 14 0 0 0 0 28z" fill="#f28a1d" stroke="#a04d00" /></ToolIcon>
        <span className="mx-1 h-8 w-px bg-[#c4c4c4]" />
        <ToolIcon label="Preview settings" className="flex w-[42px] items-center justify-center"><circle cx="16" cy="16" r="13" fill="url(#sky)" stroke="#1b3c78" /></ToolIcon>
        <Caret />
        <span className="w-2" />
      </div>
    </div>
  );
}

const Pink = "#d3486b";
const strands = "M2 3h4q6 0 10 7t14 7M30 3h-4q-6 0-10 7T2 17M2 15h4q6 0 10 7t14 7M30 15h-4q-6 0-10 7T2 29";
const dock: [string, Node][] = [
  ["Sync", <><rect x="0" y="2" width="32" height="28" fill="#8fb0ea" stroke="none" /><rect x="4" y="5" width="24" height="21" fill="#f2f6ff" stroke="none" /><path d="M8 13q8-8 16 0" stroke="#2f6fd0" strokeWidth="2.5" /><path d="M8 19q8 8 16 0" stroke={Pink} strokeWidth="2.5" /><circle cx="12" cy="16" r="3.5" stroke="#2d9a5a" /><circle cx="20" cy="16" r="3.5" stroke="#2f6fd0" /></>],
  ["GHA", <><path d="M6 7q10-9 18-3l2-3v8h-9l3-3q-6-3-14 1z" fill="#3f7ad6" stroke="none" /><path d="M27 25q-10 9-18 3l-2 3v-8h9l-3 3q6 3 14-1z" fill={Pink} stroke="none" /><text x="16" y="21" textAnchor="middle" fontSize="14" fontWeight="800" stroke="#111" strokeWidth=".4" fill="#111" fontFamily="Inter, sans-serif">GHA</text></>],
  ["Window", <><rect x="1" y="1" width="30" height="30" fill="#fff" strokeWidth="2" /><path d="M1 5h30" /><path d="M25 1h6v4h-6z" fill="#e11" /><path d="M1 5h8v3H1z" fill="#113" /><path d="M12 11l13 3-4 14-13-4z" fill="#888" stroke="#777" /><path d="M18 19l5 3M18 19v-5" stroke="#a33" /></>],
  ["Profiler", <><circle cx="16" cy="16" r="14.5" fill="#4f74d8" strokeWidth="2" /><path d="M16 2a14 14 0 0 1 11 23L16 16z" fill="#f59fb3" stroke="none" /><path d="M16 16l11 8" strokeWidth="3.5" stroke="#111" /><circle cx="16" cy="16" r="2" fill="#ccc" /></>],
  ["Package", <><path d="M2 9l4-5h20l4 5v20H2z" fill="#ef6f90" strokeWidth="2" /><path d="M2 10h28M14 4v9h5V4" strokeWidth="1.5" /><path d="M21 20q3-3 5 0t-3 4v2" /></>],
  ["Wires", <><path d={strands} stroke="#222" strokeWidth="5" /><path d={strands} stroke="#fff" strokeWidth="2" /></>],
  ["Disconnect", <><path d="M0 9l18 5-5 3 9 9-4 4-9-10-3 6z" fill="#6b96ec" stroke="#274ea8" /><path d="M17 5l12 10M29 5L17 15" stroke="#6d0d06" strokeWidth="6" /><path d="M17 5l12 10M29 5L17 15" stroke="#ee2e1c" strokeWidth="4" /></>],
  ["Relay", <><path d="M3 28q8 0 9-11T28 5" stroke={Pink} strokeWidth="2.5" /><path d="M25 1l6 4-6 4z" fill={Pink} stroke={Pink} /><path d="M2 20q0-14 7-15" stroke="#f2a9b8" strokeWidth="2.5" /><rect x="18" y="15" width="12" height="15" rx="6" fill="#f9c6d0" stroke={Pink} strokeWidth="2" /><path d="M18 22h12M24 15v7" stroke={Pink} /></>],
  ["Crossing", <path d="M2 3q8 0 14 5t14 5M30 3q-8 0-13 4M2 14q6 0 12-5M2 17q8 0 14 6t10 5M30 17q-8 0-14 6t-9 5M2 29h2M28 29h2" stroke={Pink} strokeWidth="2.5" />],
  ["Refresh", <><circle cx="16" cy="16" r="14.5" fill="#f7a3b6" stroke={Pink} strokeWidth="2" /><path d="M8 18a8.5 8.5 0 1 0 5-9" stroke="#fff" strokeWidth="3.500" /></>],
  ["Palette", <><path d="M4 5q9-6 14 2 3 5 9 6 6 6-1 13-10 8-21 0-5-10-1-21z" fill="#f4f4f4" strokeWidth="2.2" /><circle cx="11" cy="11" r="4" fill="#9c2742" /><circle cx="12" cy="21" r="4" fill="#4cae4c" /><circle cx="22" cy="20" r="4" fill="#2d5fb8" /></>],
  ["Table", <><path d="M2 3h12l2 3h13v24H2z" fill="#f2899f" stroke={Pink} strokeWidth="2" /><path d="M7 13h4M14 13h4M21 13h4M7 19h4M14 19h4M21 19h4M7 25h4M14 25h4M21 25h4" stroke="#8c1e3a" strokeWidth="3" strokeLinecap="butt" /></>],
  ["Disable", <><rect x="1" y="1" width="30" height="30" rx="2" fill="#d8e6f6" stroke="#3c6499" strokeWidth="1.8" /><circle cx="16" cy="16" r="11" stroke={Pink} strokeWidth="2.5" /><path d="M9 23L23 9" stroke={Pink} strokeWidth="2.5" /></>],
];

const wire = (x1: number, y1: number, x2: number, y2: number) => {
  const d = (x2 - x1) / 2;
  return `M${x1} ${y1}C${x1 + d} ${y1} ${x2 - d} ${y2} ${x2} ${y2}`;
};

function Balloon({ x, y, w, text }: { x: number; y: number; w: number; text: string }) {
  return (
    <div className="absolute flex h-[31px] items-center justify-center border-2 border-[#555] bg-gradient-to-b from-[#f4f4f4] to-[#dedede] pb-1 text-[20px] leading-none text-[#111]" style={{ left: x, top: y, width: w }}>
      {text}
      <svg className="absolute top-[27px] h-3 w-5" viewBox="0 0 20 12" aria-hidden="true"><path d="M2 0l8 10 8-10" fill="#dedede" stroke="#555" strokeWidth="1.5" /></svg>
    </div>
  );
}

const nodeBox = "absolute rounded-md border-2 border-[#555] bg-gradient-to-b from-[#f2f2f2] to-[#bdbdbd] shadow-[0_3px_4px_rgba(0,0,0,0.25)]";

function Param({ x, y, children }: { x: number; y: number; children: Node }) {
  return (
    <div className="absolute flex h-[45px] w-[90px] items-center justify-center rounded-md border-2 border-[#555] bg-gradient-to-b from-[#f4f4f4] to-[#bababa] shadow-[0_3px_4px_rgba(0,0,0,0.25)]" style={{ left: x, top: y }}>
      <Hex className="h-[37px] w-[42px]">{children}</Hex>
    </div>
  );
}

const grips: [number, number][] = [
  [188, 216], [280, 216], [188, 294], [280, 294], [190, 363], [281, 363],
  [370, 216], [370, 253], [370, 289], [621, 252], [905, 252], [905, 289], [905, 324], [905, 361], [905, 396], [905, 432],
  [550, 359], [617, 359], [540, 467], [632, 467], [540, 524], [632, 524],
];

function NodeCanvas() {
  return (
    <div className="relative min-h-0 flex-1 overflow-hidden bg-[#d3cfc7] text-[20px]">
      <svg className="absolute inset-0 h-full w-full" fill="none" aria-hidden="true">
        <defs>
          <pattern id="grid" x="138" y="63" width="269" height="90" patternUnits="userSpaceOnUse"><path d="M0 1H269M1 0V90" stroke="#bab6af" strokeWidth="2" /></pattern>
        </defs>
        <rect width="100%" height="100%" fill="url(#grid)" />
        <g stroke="#060606" strokeWidth="5">
          <path d={wire(284, 216, 368, 216)} />
          <path d={wire(284, 294, 368, 253)} />
          <path d={wire(285, 363, 368, 289)} />
          <path d={wire(625, 252, 903, 252)} />
          <path d={wire(622, 359, 903, 289)} />
          <path d={wire(636, 467, 903, 325)} strokeWidth="8" />
          <path d={wire(636, 467, 903, 325)} stroke="#bdbab3" strokeWidth="2" />
          <path d={wire(636, 524, 907, 361)} />
        </g>
        <g stroke="#0b0b0b" strokeWidth="3" fill="#fff">
          {grips.map(([x, y]) => <ellipse key={`${x}-${y}`} cx={x} cy={y} rx="5" ry="7" />)}
        </g>
        <circle cx="635" cy="526" r="10" stroke="#a06a66" strokeWidth="2.5" opacity=".7" />
        <path d="M197 230v13h24l12 11 12-11h23v-13M222 315l11 8 11-8" fill="#e6e6e6" stroke="#555" strokeWidth="2" />
      </svg>

      <Balloon x={197} y={137} w={71} text="Curve" />
      <Balloon x={446} y={137} w={98} text="路线截取" />
      <Balloon x={971} y={173} w={97} text="批量扫略" />
      <Balloon x={549} y={386} w={71} text="Curve" />

      <Param x={189} y={194}><Spiral /></Param>
      <Param x={189} y={271}><Spiral /></Param>
      <Param x={190} y={340}><Spiral /></Param>
      <Param x={541} y={444}><Spiral /></Param>
      <Param x={541} y={502}><Cross /></Param>

      <div className={`${nodeBox} flex h-[117px] w-[251px] items-center justify-between pr-[17px] pb-1 pl-[10px]`} style={{ left: 370, top: 194 }}>
        <div className="text-right leading-9 text-[#111]"><p>选取路线</p><p>开始线</p><p>结束线</p></div>
        <Ic className="h-10 w-10" vb="0 0 40 40"><path d="M3 37Q10 10 37 3" stroke="#aaa" strokeWidth="3" /><path d="M6 30Q12 13 24 8" stroke="#e2423a" strokeWidth="3.5" /><path d="M22 22l12 14" stroke="#444" strokeWidth="3.5" /></Ic>
        <span>本段路线</span>
      </div>

      <div className={`${nodeBox} h-[225px] w-[260px] leading-9 text-[#111]`} style={{ left: 905, top: 230 }}>
        <div className="flex">
          <div className="w-[110px] shrink-0 text-right">
            {["路径", "分段精度", "轮廓", "轮廓定位点", "轮廓图层", "图层命名"].map((t) => <p key={t} className="-ml-3 whitespace-nowrap">{t}</p>)}
          </div>
          <div className="flex w-[60px] items-center justify-center">
            <Ic className="h-10 w-9" vb="0 0 36 40"><path d="M14 18q-8 3-9-5 0-9 11-10 12-1 11 7l-1 4q8 3 7 10-1 10-8 12-6-1-6-7l6-8-6 5q-6-2-5-8z" fill="#f3f4fb" stroke="#4f55a8" strokeWidth="2" /><circle cx="23" cy="31" r="5" fill="#1b2387" /></Ic>
          </div>
          <div className="pt-9"><p>实体</p><p className="pt-[72px]">图层</p></div>
        </div>
      </div>

      <div className="absolute h-[67px] w-[67px] overflow-hidden rounded-md border-2 border-[#6b6420] bg-[#fbf04c]" style={{ left: 551, top: 325 }}>
        <p className="h-[31px] border-b-2 border-[#6b6420] bg-[#d5c93a] text-center text-[19px] leading-[26px] text-[#1c1b08]">Panel</p>
        <p className="pl-3 text-[18px] leading-7 text-[#77701c]">10</p>
      </div>

      <svg className="absolute size-24" style={{ left: 860, top: 322 }} viewBox="0 0 96 96" aria-hidden="true">
        <circle cx="46" cy="48" r="41" fill="#ece22e" opacity=".68" />
        <path d="M30 28l2 36 6-6 6 14 5-2-4-14 8-1z" fill="#fff" stroke="#555" strokeWidth="2" />
        <path d="M34 76l14-11v-4h8v-6l9 9-9 10v-6h-9l-8 7" fill="#333" stroke="#fff" strokeWidth="1" />
        <path d="M36 35l11-4M44 40l8-3" stroke="#111" strokeWidth="3" />
      </svg>

      <aside className="absolute top-[280px] left-0 flex w-[43px] flex-col gap-px">
        {dock.map(([l, n]) => (
          <button type="button" key={l} aria-label={l} className={l === "Disconnect" ? "flex h-[45px] items-center justify-center border border-[#9fd0f2] bg-[#c4e1f8]" : "flex h-[45px] items-center justify-center"}>
            <Ic className="size-[34px]">{n}</Ic>
          </button>
        ))}
      </aside>

      <div className="absolute bottom-0 left-0 flex h-[43px] w-[225px] items-center justify-between border-t-[3px] border-r-[3px] border-[#222] bg-gradient-to-r from-[#e2e2e2] via-[#dcdcdc] to-[#777] pr-3 pl-1">
        <Ic className="size-9" vb="0 0 36 36"><path d="M4 9l4-6h20l4 6v23H4z" fill="#d9934a" stroke="#5e340c" strokeWidth="2" /><path d="M4 9h28M15 3v12h6V3" stroke="#5e340c" /></Ic>
        <Hex className="h-9 w-[38px]">{glyph("0.1")}</Hex>
        <Hex className="h-9 w-[38px]"><Cross /></Hex>
        <Ic className="size-9" vb="0 0 36 36"><path d="M8 5l10 14L30 14M18 19L8 30M18 19l11 12" strokeWidth="2.5" stroke="#111" /><circle cx="7" cy="5" r="4" fill="#111" /><circle cx="30" cy="12" r="4" fill="#c22" /><circle cx="7" cy="30" r="4" fill="#111" /><circle cx="30" cy="31" r="4" fill="#111" /><circle cx="19" cy="5" r="3.5" fill="#111" /></Ic>
        <Tile fill="#fcc928"><Scribble /></Tile>
      </div>

      <svg className="absolute right-3 bottom-2 h-[70px] w-[84px]" viewBox="0 0 84 70" aria-hidden="true">
        <path d="M34 66Q8 42 28 15 48-8 74 16" fill="none" stroke="#0a0a0a" strokeWidth="5" />
        <path d="M2 31l10-8 8 9-7 8z" fill="#0a0a0a" />
        <circle cx="50" cy="37" r="30" fill="url(#dial)" stroke="#333" strokeWidth="2" />
        <circle cx="50" cy="37" r="27" fill="none" stroke="#fff" strokeWidth="3" />
        <path d="M50 9l4 11h-8zM50 64l-4-9h8zM23 37l9-4v8zM77 37l-9 4v-8z" fill="#fff" />
      </svg>
    </div>
  );
}

function GrasshopperWindow() {
  return (
    <section className="relative z-10 flex h-full min-w-0 flex-[1092] flex-col overflow-hidden border-r-[5px] border-l-2 border-r-[#eceef2] border-l-[#7d7f83] bg-[#f1f1f1]">
      <nav className="flex h-[51px] shrink-0 items-center gap-[30px] pt-1.5 pr-3.5 pl-4 font-['Open_Sans','Noto_Sans_CJK_SC',sans-serif] text-[19px] whitespace-nowrap text-[#1b1b1b]">
        {["File", "Edit", "View", "Display", "Solution", "Help"].map((t) => <button type="button" key={t}>{t}</button>)}
        <span className="ml-auto text-[18px]">隧道结构细化*</span>
      </nav>
      <div className="flex h-[34px] shrink-0 overflow-hidden font-['Liberation_Mono',monospace] text-[16px] text-[#555]">
        {ghTabs.map((t, i) => (
          <button type="button" key={i} className={i === 0 ? "w-[52px] shrink-0 rounded-t-lg border-2 border-b-0 border-[#999] bg-[#f4f4f4] pb-1 font-bold text-[#222]" : t.length === 1 ? "w-[43px] shrink-0 border-b-2 border-[#999] pt-1" : t.length === 3 ? "w-[54px] shrink-0 border-b-2 border-[#999] pt-1" : "w-[60px] shrink-0 border-b-2 border-[#999] pt-1"}>{t}</button>
        ))}
        <span className="flex-1 border-b-2 border-[#999]" />
      </div>
      <div className="flex h-[132px] shrink-0 gap-[5px] pt-[5px] pl-[3px]">
        {ribbon.map((p) => <RibbonPanel key={p.title} {...p} />)}
      </div>
      <CanvasToolbar />
      <NodeCanvas />
      <footer className="h-[27px] shrink-0 overflow-hidden border-t-2 border-white bg-[#e9e9e9] font-['Open_Sans',sans-serif] text-[19px] whitespace-nowrap text-[#222]">
        <div className="flex h-[42px] items-center pr-5 pl-1.5">
          <Ic className="mr-1 size-6" vb="0 0 24 24"><circle cx="12" cy="12" r="11" fill="#3183d8" stroke="#123c70" strokeWidth="2" /><ellipse cx="12" cy="11" rx="3" ry="6" stroke="#fff" strokeWidth="2" /></Ic>
          Autosave complete (25 seconds ago)
          <span className="mr-7 ml-auto text-[#777]">1.0.0007</span>
        </div>
      </footer>
    </section>
  );
}

/* ---------- Layers panel ---------- */
type Layer = { name: string; depth: number; open?: boolean; off?: boolean; sel?: boolean; color?: string; current?: boolean };
const layers: Layer[] = [
  { name: "00 平面图", depth: 0, open: false, off: true },
  { name: "01 详图", depth: 0, open: true },
  { name: "02图纸", depth: 1, open: false },
  { name: "03 横断面", depth: 0, open: true },
  ...["轮廓 二衬", "轮廓 仰拱", "轮廓 初支", "轮廓 排水", "轮廓 路肩", "轮廓 钢筋", "轮廓 铺装", "轮廓 路基"].map((name) => ({ name, depth: 1, sel: true })),
  { name: "钢拱架", depth: 1 },
  { name: "锚杆", depth: 1 },
  { name: "衬砌分段", depth: 0, color: "red" },
  { name: "路线", depth: 0, color: "red" },
  { name: "默认", depth: 0, current: true },
];

function LayerRow({ name, depth, open, off, sel, color, current }: Layer) {
  return (
    <tr className={sel ? "h-8 border-b-2 border-[#e9edfb] bg-[#809df0]" : "h-8 border-b border-[#ececf0]"}>
      <td className="p-0">
        <div className={depth ? "flex items-center pl-[34px]" : "flex items-center pl-2.5"}>
          <span className="flex w-[26px] items-center">
            {open !== undefined && <Ic className="size-4" vb="0 0 16 16">{open ? <path d="M2 3l6 6 6-6" stroke="#111" strokeWidth="2" /> : <path d="M5 2l6 5-6 5" stroke="#666" strokeWidth="2" />}</Ic>}
          </span>
          <span className={current ? "leading-none font-medium text-black" : "leading-none"}>{name}</span>
        </div>
      </td>
      <td className="p-0">{current && <Ic className="mx-auto h-5 w-6" vb="0 0 24 20"><path d="M2 11l7 6L22 3" stroke="#111" strokeWidth="2" /></Ic>}</td>
      <td className="p-0">{!current && <Ic className="mx-auto size-5" vb="0 0 20 20"><path d="M10 1a6.5 6.5 0 0 1 4 11l-1 4q-3 5-6 0l-1-4a6.5 6.5 0 0 1 4-11z" fill={off ? "#5d8bea" : "#ffe98c"} stroke={off ? "#24407c" : "#8a7420"} /></Ic>}</td>
      <td className="p-0">{!current && <Ic className="mx-auto size-5" vb="0 0 20 20"><path d="M1 8h13v10H1z" fill="#f7d648" stroke="#6e5a0c" /><path d="M12 8V4q3-5 6 0v4" stroke="#333" strokeWidth="1.8" /></Ic>}</td>
      <td className="p-0"><span className={color ? "mx-auto block size-[19px] border-2 border-[#4d0f08] bg-[#f02408]" : sel ? "mx-auto block size-[18px] border-2 border-white bg-black" : "mx-auto block size-[18px] bg-black"} /></td>
      <td className="overflow-hidden p-0">{sel && <span className="ml-[3px] block h-7 w-7 rounded-full bg-white" />}</td>
    </tr>
  );
}

const Page = ({ g = false }: { g?: boolean }) => <path d="M5 3h15l6 6v20H5z" fill={g ? "#bbb" : "#fff"} stroke={g ? "#888" : "#222"} strokeWidth="2" />;

const layerTools: [string, Node][] = [
  ["新建图层", <Page />],
  ["新建子图层", <><path d="M3 3h11l4 4v15H3z" fill="#fff" strokeWidth="2" /><path d="M12 10h11l5 5v15H12z" fill="#fff" strokeWidth="2" /></>],
  ["删除", <path d="M3 3l26 27M29 3L3 30" stroke="#d0150c" strokeWidth="5" />],
  ["上移", <path d="M2 24L16 9l14 15z" fill="#bbb" stroke="#999" />],
  ["下移", <path d="M2 8l14 16L30 8z" fill="url(#blue)" stroke="#1e3278" strokeWidth="2" />],
  ["上一层", <path d="M24 3v27L7 16z" fill="#cf1210" stroke="#600" strokeWidth="2" />],
  ["过滤", <path d="M2 4h26L18 16v14l-6-4V16z" fill="url(#blue)" stroke="#1e3278" strokeWidth="2" />],
  ["工具表", <Page g />],
  ["工具", <><path d="M4 30L19 12" stroke="#16225c" strokeWidth="6" /><path d="M11 6q8-6 14 1l5 7-3 3-5-4-5 2-5-6z" fill="#333" /></>],
];
const panelTabs: [string, Node][] = [
  ["属性", <Wheel />],
  ["图层", <Shell />],
  ["渲染", <><circle cx="14" cy="19" r="12" fill="url(#ball)" stroke="#12245c" /><path d="M18 8l6-6h7v6h-9z" fill="#aaa" /></>],
  ["材质", <><path d="M4 28q0-9 8-12l8-8 8 5-9 8-6 8q-6 4-9-1z" fill="#e3e3e3" stroke="#444" /><path d="M16 12L26 2q6 2 4 8l-8 8z" fill="#d8562e" stroke="#6b1e08" /></>],
  ["图库", <FolderI />],
  ["说明", <><path d="M2 2h28v28H2z" fill="#4c74dc" stroke="#223" strokeWidth="2" /><path d="M2 2h28v5H2z" fill="#dde6fb" /><circle cx="16" cy="18" r="9" fill="#fff" stroke="none" /><path d="M12 16q1-5 5-4 4 3-1 6v2M16 24v.5" stroke="#2a4dbb" strokeWidth="2.5" /></>],
];

const SyncI = () => <><path d="M7 25Q-2 13 12 6M25 7q9 12-5 19" stroke="#111" strokeWidth="2.5" /><path d="M12 1l7 5-7 5zM20 21l-7 5 7 5z" fill="#111" stroke="none" /></>;

function SidePanel() {
  return (
    <aside className="relative flex h-full min-w-0 flex-[332] flex-col overflow-hidden border-r-[3px] border-[#9b9da2] bg-[#eceef2] text-[20px] text-[#3c3e42]">
      <div className="h-[29px] shrink-0 border-b-[5px] border-[#dcdee2] bg-[#eef0f3]" />
      <div className="flex h-[110px] shrink-0 justify-end border-b-2 border-[#a9abae] bg-[#fafafa]">
        <div className="flex w-[22px] justify-center bg-[#ececec] pt-[57px]"><span className="h-7 w-[3px] bg-[#8f9194]" /></div>
      </div>
      <div className="flex h-8 shrink-0 justify-end border-b-2 border-[#d5d7dc] bg-[#fcfcfc]">
        <div className="flex w-[20px] flex-col">
          <button type="button" aria-label="上一条" className="flex flex-1 items-center justify-center border border-[#999] bg-[#f0f0f0]"><span className="size-0 border-x-4 border-b-[5px] border-x-transparent border-b-black" /></button>
          <button type="button" aria-label="下一条" className="flex flex-1 items-center justify-center border border-[#999] bg-[#f0f0f0]"><Caret /></button>
        </div>
      </div>
      <div className="flex h-[110px] shrink-0 flex-col gap-[13px] border-b border-[#cfd3da] pt-[15px] pl-3">
        <button type="button" className="flex h-[30px] items-center gap-2"><Ic className="size-[30px]"><SyncI /></Ic>同步</button>
        <div className="flex h-[30px] items-center">
          <button type="button" className="flex items-center gap-2"><Ic className="size-[30px]"><SyncI /><path d="M26 20l6 5-6 5z" fill="#111" /></Ic>切换自动同步</button>
          <button type="button" aria-label="更多" className="ml-auto pr-[94px] text-[22px] leading-none text-black">»</button>
        </div>
      </div>
      <h2 className="flex h-[39px] shrink-0 items-center gap-2 pt-2 pl-2.5">图层<span className="h-1 flex-1 border-y border-[#cdd2dc]" /></h2>
      <div className="ml-0.5 flex h-[43px] shrink-0 overflow-hidden">
        {panelTabs.map(([l, n]) => (
          <button type="button" key={l} aria-label={l} className={l === "图层" ? "flex w-[49px] shrink-0 items-center justify-center border border-b-0 border-[#b4bac6] bg-[#f3f4f8] pt-1" : "flex w-[50px] shrink-0 items-center justify-center border-b border-[#b4bac6] pt-1"}>
            <Ic className="size-6">{n}</Ic>
          </button>
        ))}
        <button type="button" aria-label="选项" className="flex flex-1 items-center justify-end border-b border-[#b4bac6] pt-2">
          <Ic className="size-5 shrink-0" vb="0 0 24 24"><circle cx="12" cy="12" r="9" stroke="#bbb" strokeWidth="2.5" strokeDasharray="4 3" /><circle cx="12" cy="12" r="3" stroke="#bbb" /></Ic>
        </button>
      </div>
      <div className="ml-1 flex h-[59px] shrink-0 items-center overflow-hidden border-b border-l border-[#c3c8d2] pt-1 pl-2">
        {layerTools.map(([l, n], i) => (
          <button type="button" key={l} aria-label={l} className="relative flex h-8 w-[35px] shrink-0 items-center justify-center">
            <Ic className="size-[23px]">{n}</Ic>
            {i > 5 && <span className="absolute right-0.5 bottom-0.5 size-0 border-b-[7px] border-l-[7px] border-b-[#222] border-l-transparent" />}
          </button>
        ))}
        <span className="ml-1 size-4 shrink-0 rounded-full bg-[#3d66d0]" />
      </div>
      <div className="ml-1 min-h-0 flex-1 bg-[#fdfdfe]">
        <table className="w-full table-fixed border-collapse">
          <colgroup><col /><col className="w-[54px]" /><col className="w-[26px]" /><col className="w-[26px]" /><col className="w-[26px]" /><col className="w-4" /></colgroup>
          <thead>
            <tr className="h-[39px] text-left">
              <th className="border-r border-[#dcdfe6] p-0 pb-1 pl-2 font-normal">图层</th>
              <th className="border-r border-[#dcdfe6] p-0 pb-1 pl-2.5 font-normal">目...</th>
              <th aria-label="打开" className="border-r border-[#dcdfe6]" />
              <th aria-label="锁定" className="border-r border-[#dcdfe6]" />
              <th aria-label="颜色" className="border-r border-[#dcdfe6]" />
              <th className="overflow-hidden p-0 pb-1 pl-1 font-normal whitespace-nowrap">材</th>
            </tr>
          </thead>
          <tbody>{layers.map((l) => <LayerRow key={l.name} {...l} />)}</tbody>
        </table>
      </div>
      <div className="ml-1 flex h-[26px] shrink-0 items-center border-b-2 border-[#c3c8d2] bg-[#f0f0f1] pl-[27px]"><span className="h-[3px] w-[142px] bg-[#8d8f92]" /></div>
      <div className="h-10 shrink-0" />
      <span className="pointer-events-none absolute inset-y-0 left-0 w-10 bg-gradient-to-r from-black/20 to-transparent" />
    </aside>
  );
}

/* ---------- Player ---------- */
function Watermark() {
  return (
    <div className="pointer-events-none absolute top-[46px] right-[48px] z-20 flex items-center gap-4">
      <span className="pt-3 text-[49px] leading-none font-bold whitespace-nowrap text-white/45">老T的前行</span>
      <svg className="h-[84px] w-[187px]" viewBox="0 0 187 84" fill="#b9b9b9" opacity=".6" role="img" aria-label="bilibili">
        {[0, 95].map((x) => (
          <g key={x} transform={`translate(${x} 0)`}>
            <path fillRule="evenodd" d="M0 5L14 0l4 51q30 0 36 12-8 19-44 20zM25 60l1 15 11-7z" />
            <path d="M52 42l10-1 5 37-8 1zM64 9l9-1 6 64-8 1zM82 42l9-1v35l-8 1z" />
            <path d="M50 25l10-1 1 12-9 1zM80 25h10v11h-9z" />
          </g>
        ))}
      </svg>
    </div>
  );
}

const W = "#e7e7e7";

function PlayerButton({ label, children, className = "size-9" }: { label: string; children: Node; className?: string }) {
  return <button type="button" aria-label={label}><Ic className={className}>{children}</Ic></button>;
}

function Danmaku({ children }: { children: Node }) {
  return (
    <>
      <path d="M10 1l3 4M22 1l-3 4M17 28H8q-5 0-5-5V11q0-6 5-6h16q5 0 5 5v6" stroke={W} strokeWidth="2.5" />
      <text x="15" y="22" textAnchor="middle" fontSize="15" fontWeight="700" fill={W} stroke="none" fontFamily="'Noto Sans CJK SC', sans-serif">弹</text>
      {children}
    </>
  );
}

function Controls() {
  return (
    <footer className="flex h-[76px] shrink-0 items-start bg-black pr-[34px] pl-9 text-[#e7e7e7]">
      <div className="flex h-[55px] min-w-0 flex-[753] items-center">
        <PlayerButton label="上一个" className="size-8"><path d="M6 6v20" stroke={W} strokeWidth="3" /><path d="M25 7v18L11 16z" fill={W} stroke={W} strokeWidth="2" /></PlayerButton>
        <span className="w-[38px]" />
        <PlayerButton label="播放" className="h-9 w-9"><path d="M6 3l21 13L6 29z" fill={W} stroke={W} strokeWidth="3" /></PlayerButton>
        <span className="w-10" />
        <PlayerButton label="下一个" className="size-8"><path d="M26 6v20" stroke={W} strokeWidth="3" /><path d="M7 7v18l14-9z" fill={W} stroke={W} strokeWidth="2" /></PlayerButton>
        <time className="ml-[42px] font-['Roboto',sans-serif] text-[20px] whitespace-nowrap">07:25 / 11:10</time>
        <div className="mr-6 ml-auto flex items-center gap-[26px]">
          <PlayerButton label="关闭弹幕" className="size-8"><Danmaku><path d="M18 24l4 5 8-10" stroke="#00aeec" strokeWidth="3" /></Danmaku></PlayerButton>
          <PlayerButton label="弹幕设置" className="size-8"><Danmaku><path d="M22 18h5l3 5-3 5h-5l-3-5z" fill="#000" stroke={W} strokeWidth="2" /><circle cx="24.5" cy="23" r="1.5" fill={W} stroke="none" /></Danmaku></PlayerButton>
        </div>
      </div>
      <form className="mt-px flex h-[54px] min-w-0 flex-[871] items-stretch overflow-hidden rounded-lg bg-[#4c4c4c]">
        <button type="button" aria-label="弹幕样式" className="flex w-12 items-center justify-center"><Ic className="size-6"><path d="M8 22L16 3l8 19M11 15h10" stroke={W} strokeWidth="3.5" /><path d="M4 29h24" stroke={W} strokeWidth="3.5" /></Ic></button>
        <input aria-label="弹幕" placeholder="发个友善的弹幕见证当下" className="min-w-0 flex-1 bg-transparent text-[19px] outline-none placeholder:text-[#a0a0a0]" />
        <a href="#etiquette" className="flex items-center gap-1.5 pr-3 text-[19px] text-[#b0b0b0]">弹幕礼仪<Ic className="h-3.5 w-2" vb="0 0 8 14"><path d="M1 1l6 6-6 6" stroke="#b0b0b0" strokeWidth="2" /></Ic></a>
        <button type="submit" className="w-[86px] bg-[#06aeec] text-[19px] font-medium text-white">发送</button>
      </form>
      <div className="flex h-[55px] min-w-0 flex-[866] items-center justify-end text-[21px] font-bold whitespace-nowrap">
        <button type="button">1080P 高清</button>
        <button type="button" className="ml-7">选集</button>
        <button type="button" className="mr-[38px] ml-10">1.5x</button>
        <div className="flex items-center gap-[38px]">
          <button type="button" aria-label="字幕" className="mr-[-4px]">
            <Ic className="h-9 w-11" vb="0 0 44 36"><rect x="2" y="5" width="40" height="26" rx="5" fill={W} stroke="none" /><text x="22" y="25" textAnchor="middle" fontSize="18" fontWeight="700" fill="#000" stroke="none" fontFamily="'Noto Sans CJK SC', sans-serif">字幕</text><path d="M9 3l26 31" stroke="#000" strokeWidth="7" /><path d="M9 3l26 31" stroke={W} strokeWidth="3" /></Ic>
          </button>
          <PlayerButton label="音量" className="size-8"><path d="M3 11h5l8-7q2-1 2 1v22q0 2-2 1l-8-7H3q-1-5 0-10z" fill={W} stroke={W} /><path d="M22 10q4 6 0 12M25 4q9 12 0 24" stroke={W} strokeWidth="2.8" /></PlayerButton>
          <PlayerButton label="设置"><path d="M12 3h8l1 4 4 2 4-1 2 5-3 3 3 4-3 5-4-1-3 2-1 3h-8l-1-3-4-2-4 1-2-6 3-3-3-3 3-5 4 1 3-2z" fill={W} stroke={W} /><circle cx="16" cy="16" r="5" fill={W} stroke="#000" strokeWidth="3" /></PlayerButton>
          <PlayerButton label="画中画"><path d="M14 26H6q-3 0-3-3V7q0-3 3-3h20q3 0 3 3v8" stroke={W} strokeWidth="2.8" /><rect x="18" y="18" width="13" height="11" rx="2" fill={W} stroke="none" /></PlayerButton>
          <PlayerButton label="更多">
            <g fill={W} stroke="none">
              <path d="M12 17H1Q1 8 8 2l2 1zM20 17h11q0-9-7-15l-2 1zM14 20l-6 9q8 4 16 0l-6-9z" />
              <circle cx="16" cy="15" r="2.5" />
            </g>
          </PlayerButton>
        </div>
      </div>
    </footer>
  );
}

export default function App() {
  return (
    <div className={`flex h-screen w-full flex-col overflow-hidden bg-black ${CJK}`}>
      <Gradients />
      <header className="flex h-[77px] shrink-0 items-center justify-between pr-[38px] pl-8 text-white">
        <h1 className="pt-5 text-[27px] leading-none">Grasshopper市政应用 01 隧道 衬砌建模</h1>
        <button type="button" aria-label="反馈" className="pt-2">
          <Ic className="size-7"><path d="M4 3h24q2 0 2 2v19q0 2-2 2h-8l-6 5v-5H4q-2 0-2-2V5q0-2 2-2z" fill={W} stroke="none" /><path d="M12 12q0-4 4-4t4 4q0 2-4 4v1M16 21v.5" stroke="#000" strokeWidth="3" /></Ic>
        </button>
      </header>
      <main className="relative flex min-h-0 flex-1 overflow-hidden">
        <RhinoWindow />
        <GrasshopperWindow />
        <SidePanel />
        <div className="pointer-events-none absolute inset-x-0 top-0 z-20 h-[215px] bg-gradient-to-b from-black/25 to-transparent" />
        <div className="pointer-events-none absolute inset-x-0 bottom-0 z-20 h-20 bg-gradient-to-t from-black/10 to-transparent" />
        <Watermark />
        <svg className="pointer-events-none absolute right-[47px] bottom-[72px] z-20 h-[82px] w-[82px] drop-shadow-[0_1px_2px_rgba(0,0,0,0.5)]" viewBox="0 0 82 82" aria-hidden="true">
          <path d="M25 10l8 12M57 10l-8 12" stroke="#fff" strokeWidth="9" strokeLinecap="round" />
          <rect x="4" y="18" width="74" height="60" rx="14" fill="#fff" />
          <path d="M33 36q0-4 4-2l18 11q3 3 0 6L37 62q-4 2-4-2z" fill="#f4f4f4" stroke="#bbb" strokeWidth="2" />
        </svg>
        <div className="absolute inset-x-4 bottom-[23px] z-30 h-[3px] bg-white/30" role="progressbar" aria-label="播放进度" aria-valuenow={66} aria-valuemin={0} aria-valuemax={100}>
          <div className="absolute inset-y-0 left-0 w-[77%] bg-white/40" />
          <div className="absolute inset-y-0 left-0 w-[66.4%] bg-[#06aeec]" />
        </div>
      </main>
      <Controls />
    </div>
  );
}
